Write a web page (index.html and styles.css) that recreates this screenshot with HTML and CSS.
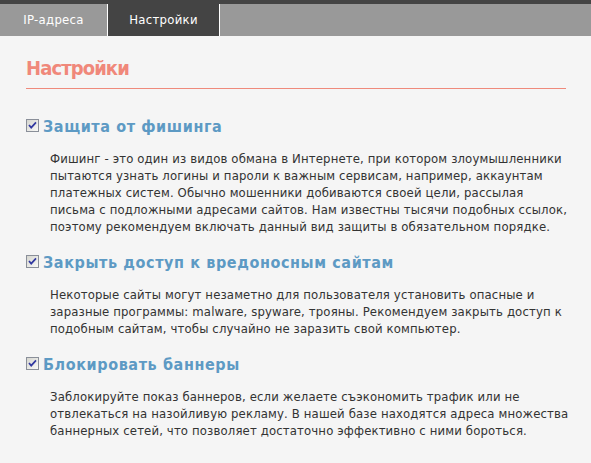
FILE: index.html
```html
<!DOCTYPE html>
<html lang="ru">
<head>
<meta charset="utf-8">
<title>Настройки</title>
<link rel="stylesheet" href="styles.css">
</head>
<body>
<nav class="tabs">
  <a class="tab tab-ip">IP-адреса</a>
  <a class="tab tab-settings active">Настройки</a>
</nav>
<main class="content">
  <h1 class="title">Настройки</h1>

  <section class="option">
    <h2 class="option-head"><svg class="check" width="13" height="13" viewBox="0 0 13 13"><defs><linearGradient id="cbg" x1="0" y1="0" x2="1" y2="1"><stop offset="0" stop-color="#d4d4ce"/><stop offset="1" stop-color="#fbfbf9"/></linearGradient></defs><rect x="0.5" y="0.5" width="12" height="12" fill="url(#cbg)" stroke="#8a8f99"/><path d="M3 6 L5.2 8.6 L10 3.4" fill="none" stroke="#3138a0" stroke-width="1.7"/></svg>Защита от фишинга</h2>
    <p class="option-text">Фишинг - это один из видов обмана в Интернете, при котором злоумышленники<br>пытаются узнать логины и пароли к важным сервисам, например, аккаунтам<br>платежных систем. Обычно мошенники добиваются своей цели, рассылая<br>письма с подложными адресами сайтов. Нам известны тысячи подобных ссылок,<br>поэтому рекомендуем включать данный вид защиты в обязательном порядке.</p>
  </section>

  <section class="option">
    <h2 class="option-head"><svg class="check" width="13" height="13" viewBox="0 0 13 13"><rect x="0.5" y="0.5" width="12" height="12" fill="url(#cbg)" stroke="#8a8f99"/><path d="M3 6 L5.2 8.6 L10 3.4" fill="none" stroke="#3138a0" stroke-width="1.7"/></svg>Закрыть доступ к вредоносным сайтам</h2>
    <p class="option-text">Некоторые сайты могут незаметно для пользователя установить опасные и<br>заразные программы: malware, spyware, трояны. Рекомендуем закрыть доступ к<br>подобным сайтам, чтобы случайно не заразить свой компьютер.</p>
  </section>

  <section class="option">
    <h2 class="option-head"><svg class="check" width="13" height="13" viewBox="0 0 13 13"><rect x="0.5" y="0.5" width="12" height="12" fill="url(#cbg)" stroke="#8a8f99"/><path d="M3 6 L5.2 8.6 L10 3.4" fill="none" stroke="#3138a0" stroke-width="1.7"/></svg>Блокировать баннеры</h2>
    <p class="option-text">Заблокируйте показ баннеров, если желаете съэкономить трафик или не<br>отвлекаться на назойливую рекламу. В нашей базе находятся адреса множества<br>баннерных сетей, что позволяет достаточно эффективно с ними бороться.</p>
  </section>
</main>
</body>
</html>
```

FILE: styles.css
```css
html, body {
  margin: 0;
  padding: 0;
  background: #f5f5f5;
}

body {
  font-family: "DejaVu Sans", Verdana, sans-serif;
  font-stretch: condensed;
  color: #333;
}

.tabs {
  display: flex;
  height: 32px;
  border-top: 4px solid #444;
  background: #999;
}

.tab {
  display: block;
  box-sizing: border-box;
  line-height: 32px;
  font-size: 13px;
  letter-spacing: 0.3px;
  color: #fff;
  text-align: center;
  border-right: 1px solid #fff;
}

.tab-ip {
  width: 108px;
}

.tab-settings {
  width: 112px;
}

.tab.active {
  background: #444;
}

.content {
  padding: 0 25px 0 26px;
}

.title {
  margin: 20px 0 0;
  padding-bottom: 8px;
  border-bottom: 1px solid #ef8a7c;
  font-size: 20px;
  line-height: 24px;
  font-weight: bold;
  letter-spacing: -0.9px;
  color: #f0887a;
}

.option-head {
  margin: 28px 0 0;
  font-size: 16px;
  line-height: 20px;
  font-weight: bold;
  letter-spacing: 0.6px;
  color: #5d9ac4;
  white-space: nowrap;
}

.option + .option .option-head {
  margin-top: 18px;
}

.check {
  vertical-align: baseline;
  margin-right: 4px;
}

.option-text {
  margin: 13px 0 0 24px;
  font-size: 13px;
  line-height: 17px;
  letter-spacing: 0.14px;
  white-space: nowrap;
}
```
